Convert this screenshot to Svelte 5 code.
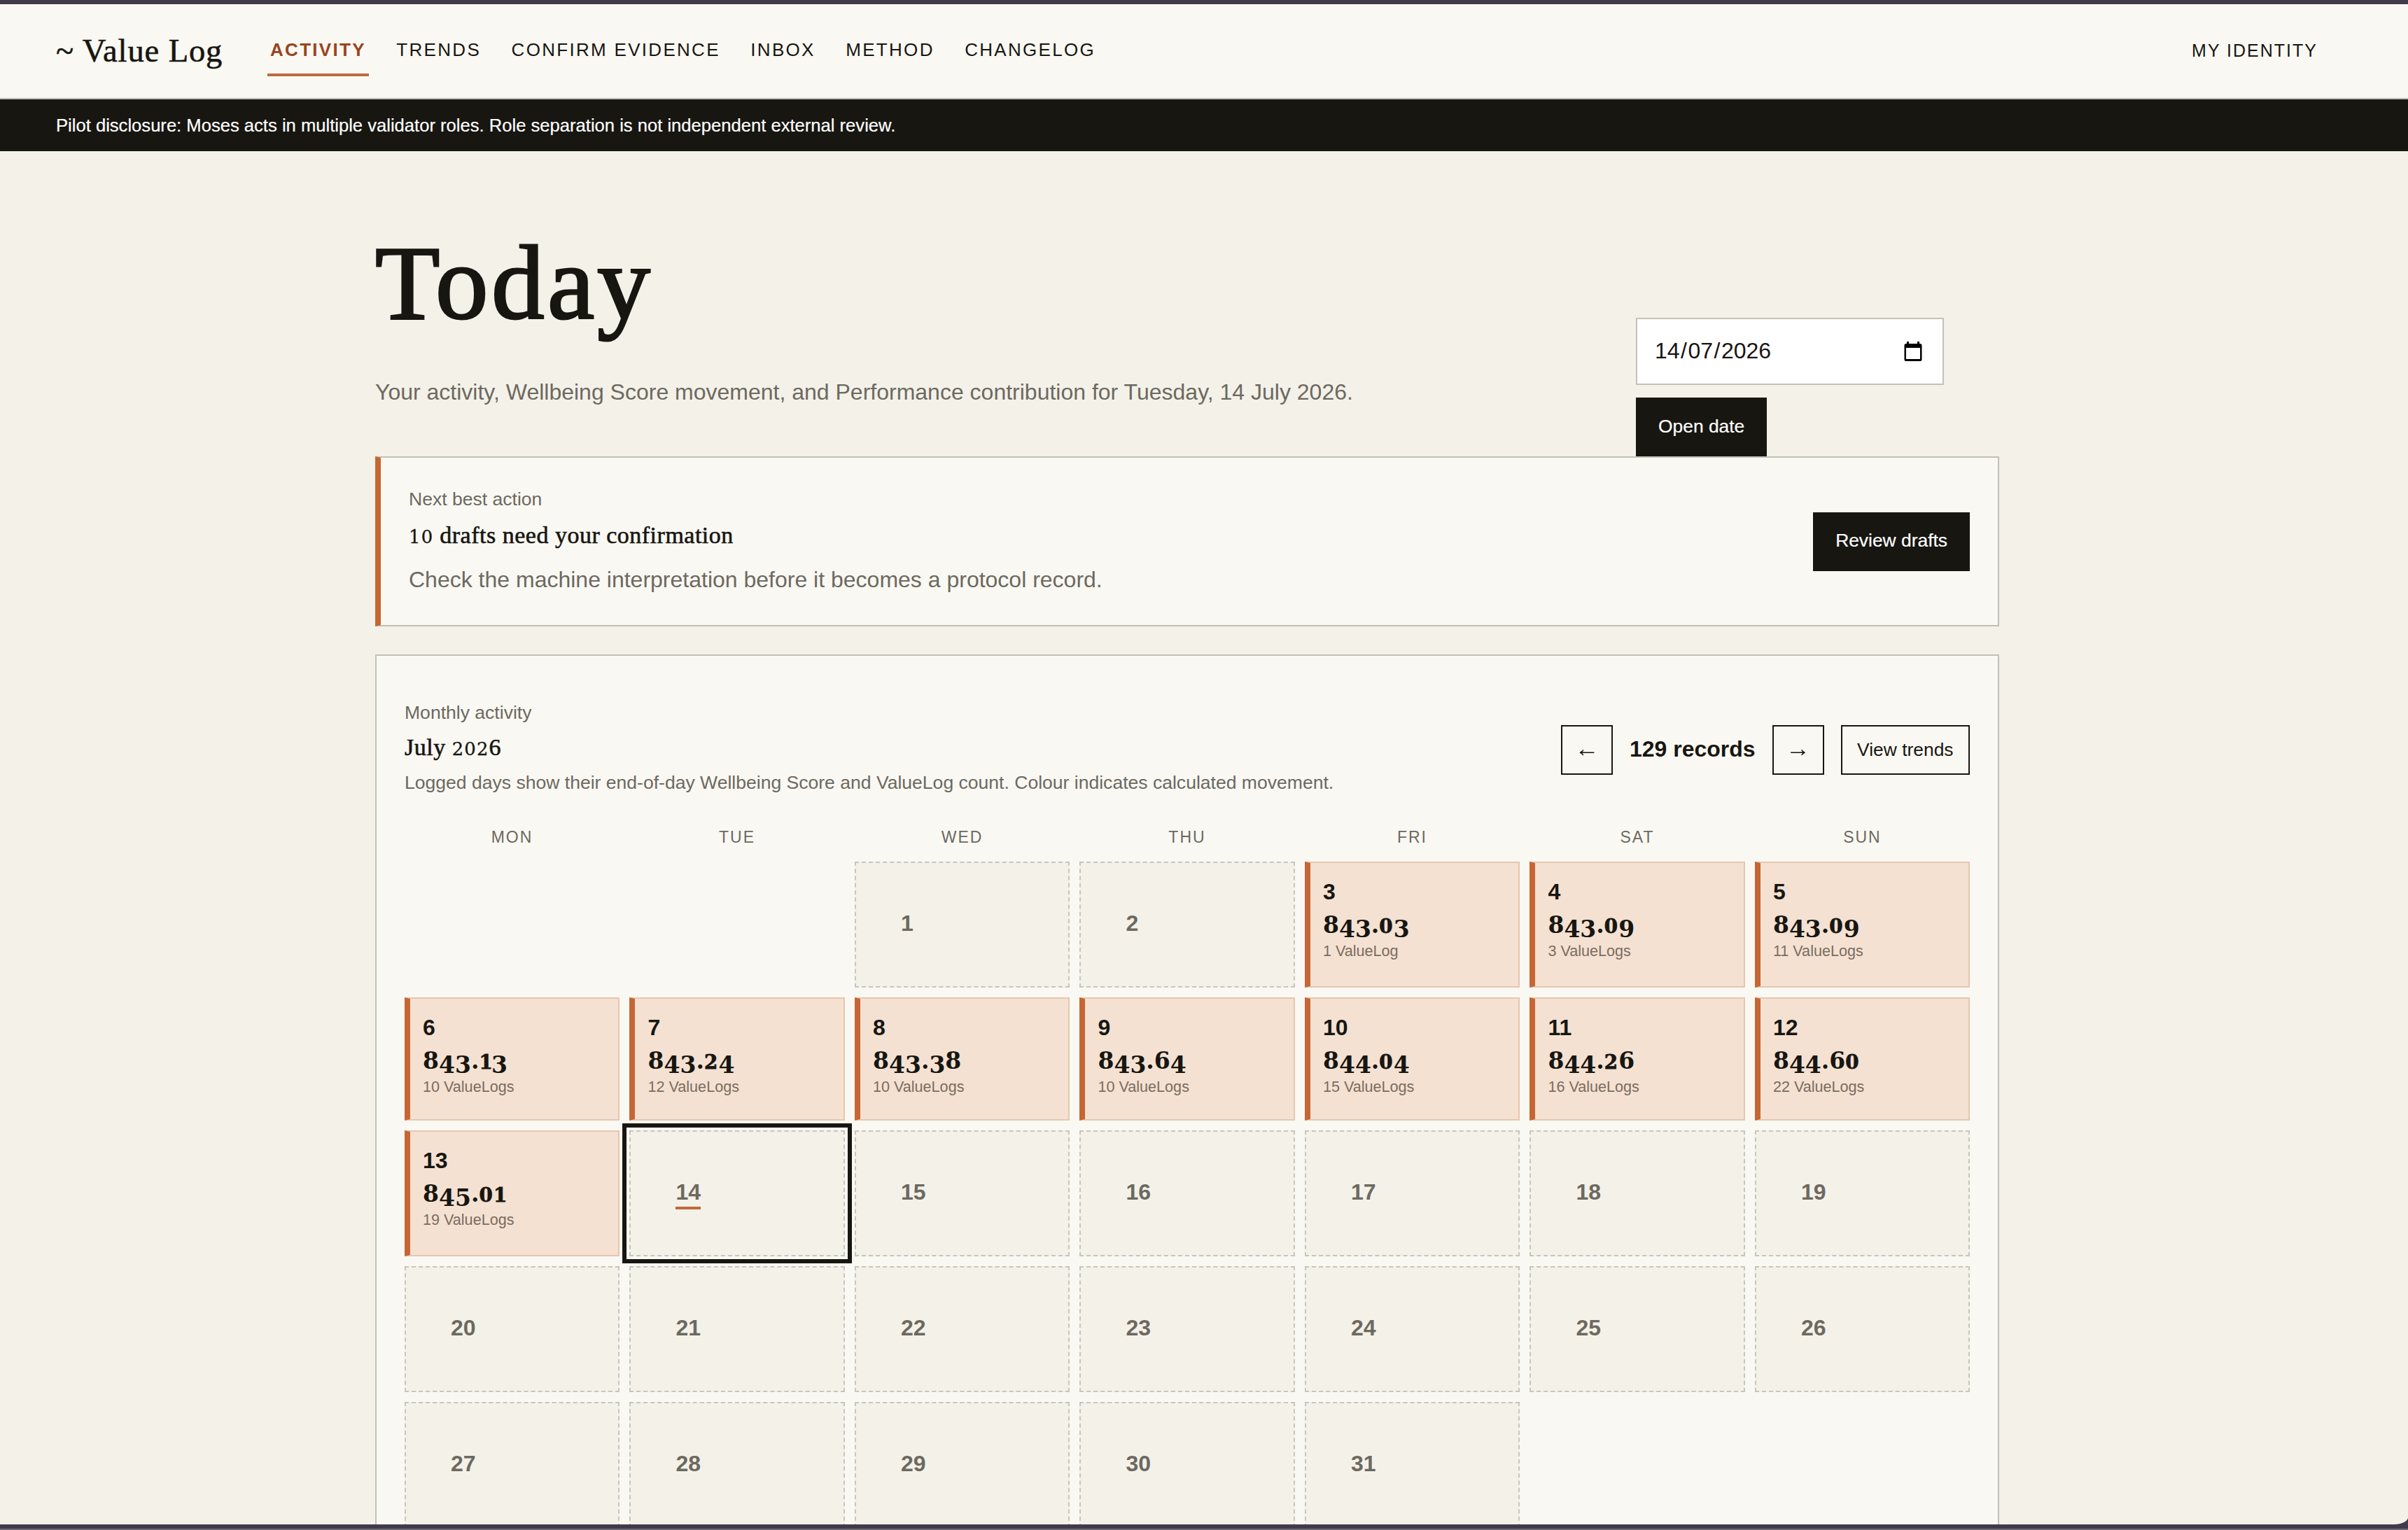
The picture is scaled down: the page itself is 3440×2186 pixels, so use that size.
<script>
  const links = ['Activity', 'Trends', 'Confirm evidence', 'Inbox', 'Method', 'Changelog'];
  const weekdays = ['Mon', 'Tue', 'Wed', 'Thu', 'Fri', 'Sat', 'Sun'];
  const today = 14;
  const logged = {
    3: ['843.03', 1], 4: ['843.09', 3], 5: ['843.09', 11], 6: ['843.13', 10],
    7: ['843.24', 12], 8: ['843.38', 10], 9: ['843.64', 10], 10: ['844.04', 15],
    11: ['844.26', 16], 12: ['844.60', 22], 13: ['845.01', 19]
  };
  const days = Array.from({ length: 31 }, (_, i) => i + 1);

  // Old-style figures: 0-2 sit at x-height, 3 4 5 7 9 hang below the baseline.
  const figure = (c) =>
    c === '1' ? 'low one' : '02'.includes(c) ? 'low' : '34579'.includes(c) ? 'hang' : 'tall';
</script>

{#snippet figures(text)}{#each text as c}<span class={figure(c)}>{c}</span>{/each}{/snippet}

<div class="window">
  <div class="page">
    <header>
      <a class="brand" href="#top">~ Value Log</a>
      <nav>
        {#each links as link, i}
          <a href="#top" class:active={i === 0}>{link}</a>
        {/each}
      </nav>
      <a class="identity" href="#top">My identity</a>
    </header>
    <div class="disclosure">Pilot disclosure: Moses acts in multiple validator roles. Role separation is not independent external review.</div>

    <main>
      <section class="intro">
        <div>
          <h1>Today</h1>
          <p class="lead">Your activity, Wellbeing Score movement, and Performance contribution for Tuesday, 14 July 2026.</p>
        </div>
        <form>
          <div class="date">
            <span>14<i>/</i>07<i>/</i>2026</span>
            <svg viewBox="0 0 26 28" width="26" height="28"><path d="M3 3h20A2.500 2.500 0 0 1 25.500 5.500v20a2.500 2.500 0 0 1-2.500 2.500h-20a2.500 2.500 0 0 1-2.500-2.500V5.500a2.500 2.500 0 0 1 2.500-2.500zM3 9v16h20V9z" fill-rule="evenodd" /><path d="M4 0h3v4H4zM19 0h3v4h-3z" /></svg>
          </div>
          <button type="button" class="solid open">Open date</button>
        </form>
      </section>

      <section class="panel next">
        <div>
          <p class="label">Next best action</p>
          <h2>{@render figures('10')} drafts need your confirmation</h2>
          <p class="lead">Check the machine interpretation before it becomes a protocol record.</p>
        </div>
        <button type="button" class="solid">Review drafts</button>
      </section>

      <section class="panel month">
        <div class="month-head">
          <div>
            <p class="label">Monthly activity</p>
            <h2>July {@render figures('2026')}</h2>
            <p class="label">Logged days show their end-of-day Wellbeing Score and ValueLog count. Colour indicates calculated movement.</p>
          </div>
          <div class="controls">
            <button type="button" class="line arrow">←</button>
            <strong>129 records</strong>
            <button type="button" class="line arrow">→</button>
            <button type="button" class="line">View trends</button>
          </div>
        </div>
        <div class="weekdays">
          {#each weekdays as d}<span>{d}</span>{/each}
        </div>
        <div class="grid">
          {#each days as d}
            {#if logged[d]}
              <div class="day filled">
                <b>{d}</b>
                <strong class="score">{@render figures(logged[d][0])}</strong>
                <small>{logged[d][1]} ValueLog{logged[d][1] === 1 ? '' : 's'}</small>
              </div>
            {:else}
              <div class="day empty" class:first={d === 1} class:today={d === today}><b>{d}</b></div>
            {/if}
          {/each}
        </div>
      </section>
    </main>
  </div>
</div>

<style>
  :global(body) { background: #403a4b; }
  * { box-sizing: border-box; margin: 0; }
  .window {
    width: 3440px;
    height: 2186px;
    padding: 6px 0;
    border-bottom: 2px solid #6d6a72;
    background: #403a4b;
    overflow: hidden;
    font-family: 'Liberation Sans', Arial, sans-serif;
    font-size: 32px;
    color: #171611;
  }
  .page {
    height: 2172px;
    overflow: hidden;
    background: #f4f1e9;
    border-bottom-right-radius: 20px 10px;
  }
  a { color: inherit; text-decoration: none; white-space: nowrap; }
  header {
    height: 136px;
    padding: 0 129px 0 80px;
    border-bottom: 2px solid #bebdb1;
    background: #faf8f3;
    display: flex;
    align-items: center;
  }
  .brand {
    width: 302px;
    font-family: Georgia, 'Liberation Serif', serif;
    font-size: 46.5px;
    line-height: 52px;
    letter-spacing: 0.9px;
    -webkit-text-stroke: 0.6px;
  }
  nav {
    display: flex;
    gap: 35.5px;
    flex: 1;
    text-transform: uppercase;
    font-size: 26px;
    letter-spacing: 2.3px;
  }
  nav a { padding: 16px 4px 19px; line-height: 30px; border-bottom: 4px solid transparent; margin-top: 3px; }
  nav .active { color: #984520; font-weight: 700; border-color: #c06a3c; }
  .identity { font-size: 25px; letter-spacing: 2px; text-transform: uppercase; padding-bottom: 2px; }
  .disclosure {
    height: 74px;
    padding-left: 80px;
    background: #171611;
    color: #fff;
    font-size: 25.6px;
    line-height: 74px;
    -webkit-text-stroke: 0.2px;
  }
  main { width: 2320px; margin: 0 0 0 536px; }
  .intro { height: 436px; display: flex; justify-content: space-between; }
  h1 {
    padding-top: 103px;
    font: 400 151px/170px Georgia, 'Liberation Serif', serif;
    letter-spacing: 4.4px;
    -webkit-text-stroke: 3px;
  }
  .lead { font-size: 32px; line-height: 40px; color: #6c6960; white-space: nowrap; }
  .intro .lead { padding-top: 51px; }
  form { width: 519px; padding-top: 238px; display: flex; flex-direction: column; align-items: flex-start; gap: 18px; }
  .date {
    width: 440px;
    height: 96px;
    padding: 0 29px 0 25px;
    border: 2px solid #c4c1b7;
    background: #fff;
    display: flex;
    align-items: center;
    justify-content: space-between;
  }
  .date span { padding-bottom: 2px; }
  .date i { font-style: normal; padding: 0 1.5px; }
  button { font: 400 26.4px/30px 'Liberation Sans', Arial, sans-serif; border: 0; border-radius: 0; white-space: nowrap; }
  .solid { height: 84px; padding: 0 32px 3px; background: #171611; color: #fff; -webkit-text-stroke: 0.2px; }
  .panel { border: 2px solid #c2c0b6; background: #faf8f3; }
  .next {
    height: 243px;
    padding: 0 40px;
    border-left: 8px solid #c66635;
    display: flex;
    align-items: center;
    justify-content: space-between;
  }
  .label { font-size: 26.56px; line-height: 36px; color: #6c6960; white-space: nowrap; }
  h2 { font: 400 34px/44px Georgia, 'Liberation Serif', serif; height: 44px; letter-spacing: 0.5px; -webkit-text-stroke: 0.6px; }
  h2 + .lead { padding: 21px 0 4px; }
  .next h2 { margin-top: 12px; }
  .month { margin-top: 40px; height: 1300px; padding: 63px 40px 0; }
  .month-head { height: 169px; display: flex; justify-content: space-between; }
  .month-head h2 { margin: 10px 0 10px; }
  .controls { display: flex; gap: 24px; height: 71px; margin-top: 36px; align-items: center; }
  .controls strong { padding-bottom: 2px; }
  .line { height: 71px; padding: 0 21.500px 2px; background: transparent; border: 2px solid #171611; color: #171611; }
  .arrow { width: 74px; padding: 0 0 6px; font-size: 35px; }
  .weekdays, .grid { display: grid; grid-template-columns: repeat(7, 1fr); column-gap: 14.4px; }
  .weekdays { height: 62px; padding-top: 13px; text-align: center; text-transform: uppercase; font-size: 23px; line-height: 28px; letter-spacing: 2px; color: #6c6960; }
  .grid { row-gap: 14px; }
  .day { min-height: 176px; }
  .first { grid-column: 3; }
  .filled {
    padding: 23px 16px 0 18px;
    border: 2px solid #e6c6b0;
    border-left: 8px solid #c66635;
    background: #f4e1d2;
    display: flex;
    flex-direction: column;
  }
  .filled b { line-height: 36px; }
  .score { font: 700 33px/40px 'DejaVu Serif', serif; height: 40px; margin-top: 10px; }
  small { font-size: 21.6px; line-height: 26px; color: #7b6c5e; margin-top: 4px; }
  .empty {
    height: 180px;
    padding: 68px 0 0 64px;
    border: 2px dashed #c8c5ba;
    background: #f4f1e9;
    color: #6c6960;
  }
  .empty b { display: inline-block; line-height: 36px; }
  .today { outline: 6px solid #171611; outline-offset: 4px; }
  .today b { height: 43px; border-bottom: 4px solid #c06a3c; }
  .low, .hang, .tall { line-height: 0; }
  h2 .low { font-family: Georgia, 'DejaVu Serif', serif; font-size: 0.76em; letter-spacing: 1.2px; -webkit-text-stroke: 0.3px; }
  .score .low { font-size: 0.84em; letter-spacing: 1.2px; -webkit-text-stroke: 0.8px; }
  .score .one { letter-spacing: -1.8px; }
  .hang { vertical-align: -0.17em; }
</style>
